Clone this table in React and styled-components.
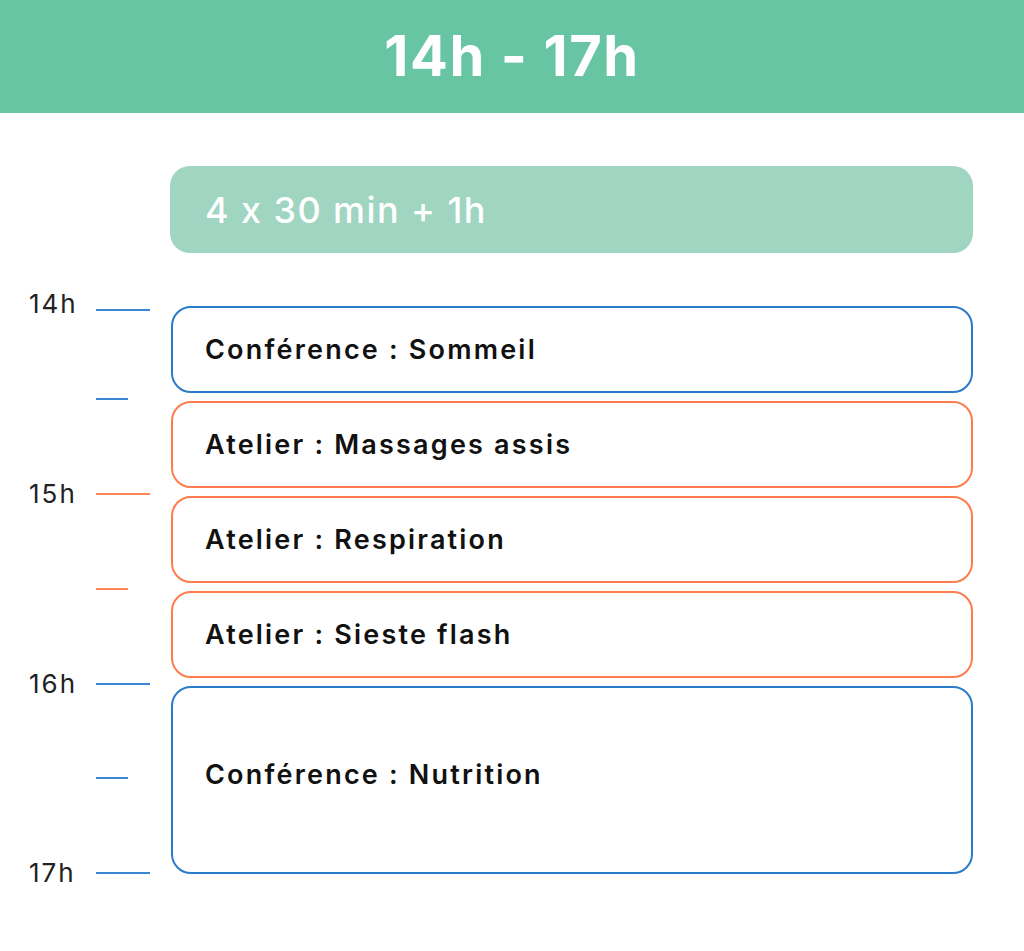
import React from "react";
import styled, { createGlobalStyle } from "styled-components";

const GlobalStyle = createGlobalStyle`
  html, body { margin: 0; padding: 0; background: #ffffff; }
  body {
    font-family: Inter, "Noto Sans", "Liberation Sans", sans-serif;
    font-feature-settings: "calt" 0;
  }
`;

const COLORS = { blue: "#2a7bc9", orange: "#ff7c4c" };
const TICK_COLORS = { blue: "#3a86d3", orange: "#ff8757" };

const Page = styled.div`
  width: 1024px;
  min-height: 951px;
  background: #fff;
`;

const Header = styled.header`
  height: 113px;
  background: #67c5a3;
  display: flex;
  align-items: center;
  justify-content: center;
`;

const Title = styled.h1`
  margin: 0;
  color: #fff;
  font-size: 56px;
  font-weight: 700;
  letter-spacing: 1.6px;
  line-height: 1;
  padding-bottom: 2px;
`;

const Content = styled.main`
  padding: 53px 51px 0 170px;
`;

const Banner = styled.div`
  height: 87px;
  border-radius: 20px;
  background: #9fd5c1;
  display: flex;
  align-items: center;
  padding-left: 35px;
  color: #fff;
  font-size: 36px;
  font-weight: 500;
  letter-spacing: 1.4px;
`;

const Timeline = styled.section`
  display: grid;
  grid-template-columns: 171px 802px;
  margin: 53px 0 0 -170px;
`;

const Axis = styled.div`
  display: flex;
  flex-direction: column;
`;

const TickRow = styled.div`
  height: 24px;
  display: flex;
  align-items: center;
  margin-top: ${(p) => p.$gap}px;
`;

const HourLabel = styled.span`
  width: 67px;
  padding-left: 29px;
  font-size: 26px;
  font-weight: 400;
  letter-spacing: 2px;
  color: #222;
  line-height: 1;
  position: relative;
  top: ${(p) => p.$shift || 0}px;
`;

const TickLine = styled.span`
  display: block;
  height: 1.5px;
  width: ${(p) => (p.$short ? 32 : 54)}px;
  background: ${(p) => TICK_COLORS[p.$tone]};
`;

const Slots = styled.div`
  display: flex;
  flex-direction: column;
  gap: 8px;
`;

const Slot = styled.div`
  box-sizing: border-box;
  height: ${(p) => (p.$long ? 188 : 87)}px;
  border: 2.8px solid ${(p) => COLORS[p.$tone]};
  border-radius: 20px;
  display: flex;
  align-items: center;
  padding-left: 32px;
  padding-bottom: ${(p) => (p.$long ? 12 : 0)}px;
  font-size: 27px;
  font-weight: 600;
  letter-spacing: 2.2px;
  color: #111;
`;

const ticks = [
  { label: "14h", tone: "blue", gap: -8, shift: -6 },
  { tone: "blue", short: true, gap: 65 },
  { label: "15h", tone: "orange", gap: 71 },
  { tone: "orange", short: true, gap: 71 },
  { label: "16h", tone: "blue", gap: 71 },
  { tone: "blue", short: true, gap: 70 },
  { label: "17h", tone: "blue", gap: 71 },
];

const slots = [
  { text: "Conférence : Sommeil", tone: "blue" },
  { text: "Atelier : Massages assis", tone: "orange" },
  { text: "Atelier : Respiration", tone: "orange" },
  { text: "Atelier : Sieste flash", tone: "orange" },
  { text: "Conférence : Nutrition", tone: "blue", long: true },
];

export default function App() {
  return (
    <Page>
      <GlobalStyle />
      <Header>
        <Title>14h - 17h</Title>
      </Header>
      <Content>
        <Banner>4 x 30 min + 1h</Banner>
        <Timeline>
          <Axis>
            {ticks.map((t, i) => (
              <TickRow key={i} $gap={t.gap}>
                <HourLabel $shift={t.shift}>{t.label || ""}</HourLabel>
                <TickLine $tone={t.tone} $short={t.short} />
              </TickRow>
            ))}
          </Axis>
          <Slots>
            {slots.map((s, i) => (
              <Slot key={i} $tone={s.tone} $long={s.long}>
                {s.text}
              </Slot>
            ))}
          </Slots>
        </Timeline>
      </Content>
    </Page>
  );
}
